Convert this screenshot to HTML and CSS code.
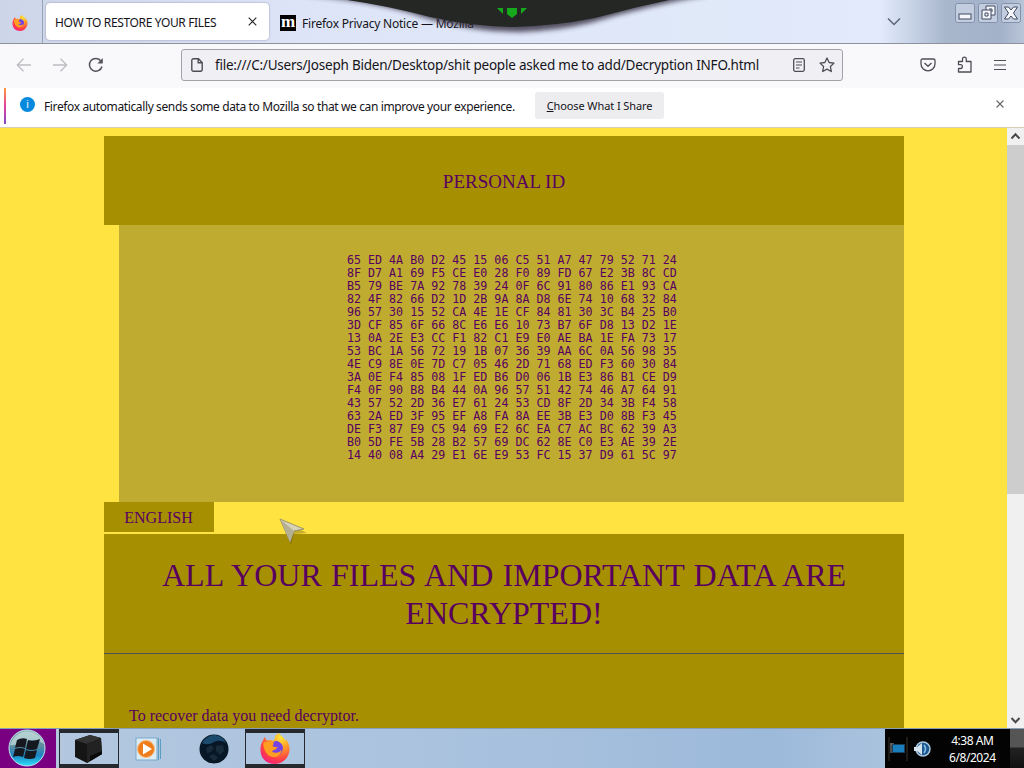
FILE: index.html
```
<!DOCTYPE html>
<html lang="en">
<head>
    <meta charset="UTF-8">
    <meta name="viewport" content="width=device-width, initial-scale=1.0">
    <title>HOW TO RESTORE YOUR FILES</title>
    <link rel="stylesheet" href="styles.css">
</head>
<body>
    <svg class="defs" width="0" height="0">
        <defs>
            <radialGradient id="fox" cx="0.7" cy="0.15" r="1">
                <stop offset="0" stop-color="#ffe63b"/>
                <stop offset="0.35" stop-color="#ff9a27"/>
                <stop offset="0.7" stop-color="#ff4045"/>
                <stop offset="1" stop-color="#f0148c"/>
            </radialGradient>
            <symbol id="firefox" viewBox="0 0 32 32">
                <path fill="url(#fox)" d="M20 0c2 3 5 4 7 8l1-1c3 5 4 10 2 15-2 6-8 10-14 10C7 32 1 26 1 17c0-4 1-7 3-10l1-3 3 4c2-1 4-1 6 0 2-1 2-3 2-5 1-1 3-2 4-3z"/>
                <path fill="#7542e4" d="M17 8c5 1 8 5 7 9-1 5-5 7-9 6-4 0-6-3-6-6l5 1c2 0 3-2 5-3l-5-1c-1-2 0-5 3-6z"/>
                <path fill="#ff9e20" d="M4 10c4-2 8-1 11 1l-3 3 6 1c-1 3-4 2-5 4 4 3 8 1 10-2-1 7-7 9-12 7-5-3-7-8-7-14z"/>
            </symbol>
        </defs>
    </svg>

    <header class="titlebar">
        <div class="pinned"><svg width="16" height="16"><use href="#firefox"/></svg></div>
        <div class="tab active">
            <span class="tab-title">HOW TO RESTORE YOUR FILES</span>
            <svg width="9" height="9" viewBox="0 0 9 9"><path d="M.7.7l7.6 7.6M8.3.7L.7 8.3" stroke="#222" stroke-width="1.1"/></svg>
        </div>
        <div class="tab second">
            <span class="moz">m</span>
            <span class="tab-title privacy">Firefox Privacy Notice — Mozilla</span>
        </div>
        <svg class="tabs-arrow" width="14" height="9" viewBox="0 0 14 9"><path d="M1 1.5l6 6 6-6" fill="none" stroke="#5d6478" stroke-width="1.5"/></svg>
        <div class="window-buttons">
            <svg width="20" height="20" viewBox="0 0 20 20"><rect class="key" x=".5" y=".5" width="19" height="19" rx="2"/><rect class="sign" x="4" y="11" width="12" height="5"/></svg>
            <svg width="20" height="20" viewBox="0 0 20 20"><rect class="key" x=".5" y=".5" width="19" height="19" rx="2"/><path class="sign" d="M8 3h9v9h-4v4H4V7h4z"/><path class="lines" d="M8 7h5v5M7 10h3v3H7zM11 6h3v3"/></svg>
            <svg width="20" height="20" viewBox="0 0 20 20"><rect class="key" x=".5" y=".5" width="19" height="19" rx="2"/><path class="sign" d="M3.500 4h4L10 7l2.500-3h4l-4 6 4 6h-4L10 13l-2.500 3h-4l4-6z"/></svg>
        </div>
        <svg class="notch" width="440" height="43" viewBox="0 0 440 43">
            <defs><filter id="soft" x="-10%" y="-20%" width="120%" height="160%"><feGaussianBlur stdDeviation="2.500"/></filter></defs>
            <path d="M0-5Q65 0 110 13Q165 32 220 32Q255 31 290 23Q350 5 410-5z" fill="#30293e" opacity=".8" filter="url(#soft)"/>
            <path d="M40-1Q85 5 130 17Q175 27 215 27Q255 26 295 18Q335 7 374-1z" fill="#252725"/>
            <path d="M207 8h10v6l-5 4-5-4z" fill="#16a81d"/>
            <path d="M197 8h6v6zM221 8h6l-6 6z" fill="#16a81d"/>
        </svg>
    </header>

    <nav class="toolbar">
        <svg class="back" width="16" height="16" viewBox="0 0 16 16"><path d="M15 8H1.500M7.500 1.800L1.300 8l6.200 6.200" fill="none" stroke="#bcbcc2" stroke-width="1.300"/></svg>
        <svg class="forward" width="16" height="16" viewBox="0 0 16 16"><path d="M1 8h13.500M8.500 1.800L14.700 8l-6.200 6.200" fill="none" stroke="#bcbcc2" stroke-width="1.300"/></svg>
        <svg class="reload" width="16" height="16" viewBox="0 0 16 16"><path d="M14 9.500A6.400 6.400 0 1 1 13 4" fill="none" stroke="#55555d" stroke-width="1.500"/><path d="M14.800 1v5.500H9.300z" fill="#55555d"/></svg>
        <div class="urlbar">
            <svg width="12" height="14" viewBox="0 0 12 14"><path d="M2.500.8h5l3.700 3.700v7.200a1.500 1.500 0 0 1-1.500 1.500H2.300A1.500 1.500 0 0 1 .8 11.700V2.300A1.500 1.500 0 0 1 2.500.8zM7.200.8v4h4" fill="none" stroke="#4d4d55" stroke-width="1.400"/></svg>
            <span class="url">file:///C:/Users/Joseph Biden/Desktop/shit people asked me to add/Decryption INFO.html</span>
            <svg class="reader" width="12" height="14" viewBox="0 0 12 14"><rect x=".7" y=".7" width="10.600" height="12.600" rx="1.500" fill="none" stroke="#4d4d55" stroke-width="1.300"/><path d="M3 4h6M3 7h6M3 10h3.500" stroke="#4d4d55" stroke-width="1.200"/></svg>
            <svg width="16" height="16" viewBox="0 0 16 16"><path d="M8 1l2.100 4.500 4.900.6-3.600 3.400.9 5L8 12.100l-4.300 2.400.9-5L1 6.100l4.900-.6z" fill="none" stroke="#4d4d55" stroke-width="1.300" stroke-linejoin="round"/></svg>
        </div>
        <div class="tools">
            <svg width="16" height="14" viewBox="0 0 16 14"><path d="M2.500 1h11Q15 1 15 2.500V6a7 6.800 0 0 1-14 0V2.500Q1 1 2.500 1zM4.500 5L8 8.300 11.500 5" fill="none" stroke="#4d4d55" stroke-width="1.300" stroke-linejoin="round"/></svg>
            <svg width="16" height="17" viewBox="0 0 16 17"><path d="M1.500 5.500h4V3a1.900 1.900 0 0 1 3.800 0v2.500H14V16H1.500v-3.500h2a1.900 1.900 0 0 0 0-3.800h-2z" fill="none" stroke="#4d4d55" stroke-width="1.300" stroke-linejoin="round"/></svg>
            <svg width="14" height="12" viewBox="0 0 14 12"><path d="M1 1.500h12M1 6h12M1 10.500h12" stroke="#4d4d55" stroke-width="1.200"/></svg>
        </div>
    </nav>

    <div class="notice">
        <span class="info">i</span>
        <span class="notice-text">Firefox automatically sends some data to Mozilla so that we can improve your experience.</span>
        <button class="choose"><u>C</u>hoose What I Share</button>
        <svg class="dismiss" width="8" height="8" viewBox="0 0 8 8"><path d="M.5.5l7 7M7.500.5l-7 7" stroke="#666" stroke-width="1.100"/></svg>
    </div>

    <div class="viewport">
        <main class="page">
            <div class="id-title">PERSONAL ID</div>
            <pre class="id-code">65 ED 4A B0 D2 45 15 06 C5 51 A7 47 79 52 71 24
8F D7 A1 69 F5 CE E0 28 F0 89 FD 67 E2 3B 8C CD
B5 79 BE 7A 92 78 39 24 0F 6C 91 80 86 E1 93 CA
82 4F 82 66 D2 1D 2B 9A 8A D8 6E 74 10 68 32 84
96 57 30 15 52 CA 4E 1E CF 84 81 30 3C B4 25 B0
3D CF 85 6F 66 8C E6 E6 10 73 B7 6F D8 13 D2 1E
13 0A 2E E3 CC F1 82 C1 E9 E0 AE BA 1E FA 73 17
53 BC 1A 56 72 19 1B 07 36 39 AA 6C 0A 56 98 35
4E C9 8E 0E 7D C7 05 46 2D 71 68 ED F3 60 30 84
3A 0E F4 85 08 1F ED B6 D0 06 1B E3 86 B1 CE D9
F4 0F 90 B8 B4 44 0A 96 57 51 42 74 46 A7 64 91
43 57 52 2D 36 E7 61 24 53 CD 8F 2D 34 3B F4 58
63 2A ED 3F 95 EF A8 FA 8A EE 3B E3 D0 8B F3 45
DE F3 87 E9 C5 94 69 E2 6C EA C7 AC BC 62 39 A3
B0 5D FE 5B 28 B2 57 69 DC 62 8E C0 E3 AE 39 2E
14 40 08 A4 29 E1 6E E9 53 FC 15 37 D9 61 5C 97</pre>
            <div class="lang">ENGLISH</div>
            <section class="note">
                <h1>ALL YOUR FILES AND IMPORTANT DATA ARE ENCRYPTED!</h1>
                <p>To recover data you need decryptor.</p>
            </section>
        </main>
        <div class="scrollbar">
            <svg width="17" height="17" viewBox="0 0 17 17"><path d="M4.500 10.500l4-4.200 4 4.200" fill="none" stroke="#4a4a4a" stroke-width="2"/></svg>
            <div class="thumb"></div>
            <svg class="down" width="17" height="17" viewBox="0 0 17 17"><path d="M4.500 7l4 4.200 4-4.200" fill="none" stroke="#4a4a4a" stroke-width="2"/></svg>
        </div>
    </div>

    <footer class="taskbar">
        <div class="start">
            <svg width="40" height="40" viewBox="0 0 40 40">
                <defs>
                    <linearGradient id="orb" x1="0" y1="0" x2="0" y2="1">
                        <stop offset="0" stop-color="#8fb6b8"/>
                        <stop offset=".45" stop-color="#5c8ca0"/>
                        <stop offset=".7" stop-color="#1b84c4"/>
                        <stop offset="1" stop-color="#2fe0fa"/>
                    </linearGradient>
                </defs>
                <circle cx="20" cy="19" r="18" fill="url(#orb)" stroke="#bfe4ec"/>
                <path d="M3 16Q8 3 20 2.500 33 3 37 15 27 8 18 13 10 17 3 16z" fill="#d6e9e6" opacity=".6"/>
                <path d="M10 11q5-3 10-1l-2 9q-5-2-10 0zM21 11q5 2 12-1l-3 10q-5 2-11 0zM8 20q5-2 10 0l-2 8q-5-2-10 0zM19 21q5 2 11 0l-2 8q-5 2-11 0z" fill="#15191f"/>
            </svg>
        </div>
        <div class="task open">
            <svg width="32" height="30" viewBox="0 0 32 30"><path d="M2 6l15-5 11 3 1 16-15 9L2 23z" fill="#151515"/><path d="M2 6l15-5 11 3-14 6z" fill="#333"/><path d="M14 10l14-6 1 16-15 9z" fill="#222"/><path d="M17 22l12-5v3l-12 7z" fill="#090909"/></svg>
        </div>
        <div class="task player">
            <svg width="28" height="26" viewBox="0 0 28 26"><rect x="1" y="2" width="21" height="22" fill="#dcecf5" stroke="#78a8c8"/><path d="M23.500 2v22M25.500 3v20" stroke="#5a9ec4"/><circle cx="11" cy="13" r="8.500" fill="#ef7c1b" stroke="#f9ba7c"/><path d="M8 7.500l9 5.500-9 5.500z" fill="#fff"/></svg>
        </div>
        <div class="task globe">
            <svg width="30" height="30" viewBox="0 0 30 30"><circle cx="15" cy="15" r="14.500" fill="#081726"/><path d="M3 9Q8 1 16 1q8 1 11 8-6-4-12-1-6 4-12 1z" fill="#1c4a6c"/><path d="M7 14l5-3 3 3-3 4-4 1zM17 12l7-1 1 6-4 4-4-4zM10 22l5-2 4 4-4 3z" fill="#182b3c"/></svg>
        </div>
        <div class="task open"><svg width="32" height="31"><use href="#firefox"/></svg></div>
        <div class="tray">
            <svg width="20" height="26" viewBox="0 0 20 26"><path d="M1 1v24M19 1v24" stroke="#3a3326"/><path d="M3 7v10M3 8h3" stroke="#9a9a9a"/><rect x="4.500" y="8.500" width="12" height="8" fill="#197dbc" stroke="#1b405d"/></svg>
            <svg class="sound" width="18" height="18" viewBox="0 0 18 18"><circle cx="10" cy="9" r="7" fill="#1d598f" stroke="#acc9de" stroke-width="1.500"/><path d="M1 7h3l5-4v12l-5-4H1z" fill="#d4e2ec"/><path d="M11 5q3 4 0 8" fill="none" stroke="#8ac0ee" stroke-width="1.500"/></svg>
            <div class="clock"><span>4:38 AM</span><span>6/8/2024</span></div>
            <div class="show-desktop"></div>
        </div>
    </footer>

    <svg class="cursor" width="30" height="28" viewBox="0 0 30 28">
        <path d="M3 3l25 12-13 1-3 11z" fill="#6b5a10" opacity=".4"/>
        <path d="M1 1l24 10-10 2-4 11z" fill="#d6d2b8" stroke="#8d8563" stroke-width=".8"/>
        <path d="M1 1l14 12-4 11z" fill="#b5af94"/>
    </svg>
</body>
</html>
```
FILE: styles.css
```
* {
    box-sizing: border-box;
}

body {
    margin: 0;
    width: 1024px;
    height: 768px;
    overflow: hidden;
    display: flex;
    flex-direction: column;
    font-family: "Noto Sans", "Open Sans", sans-serif;
    font-size: 12px;
    color: #15141a;
}

svg {
    display: block;
    flex: none;
}

.defs {
    position: absolute;
}

/* tabs */
.titlebar {
    position: relative;
    flex: none;
    height: 44px;
    display: flex;
    border-bottom: 1px solid #8c929e;
    background: linear-gradient(90deg, #cdd5e9 0, #d5dcf0 130px, #dde4f8 300px, #e0e9f8 700px, #e2eafb 880px, #c9d4e8 910px, #a9b7cd 945px, #a3b1c9 1000px, #b9c5d9 1024px);
}

.pinned {
    width: 43px;
    padding: 15px 0 0 12px;
    border-right: 1px solid #98a1b6;
}

.tab {
    display: flex;
    align-items: center;
    height: 37px;
    margin: 3px 0 0 3px;
    padding: 0 12px 0 9px;
    white-space: nowrap;
}

.tab.active {
    width: 223px;
    justify-content: space-between;
    background: #fff;
    border-radius: 4px;
    box-shadow: 0 0 2px #8088a0;
}

.tab.second {
    height: 39px;
    margin-left: 0;
}

.tab-title {
    padding-top: 1px;
    letter-spacing: -0.36px;
}

.moz {
    width: 16px;
    height: 16px;
    margin: 0 6px 0 2px;
    background: #000;
    color: #fff;
    font: bold 17px/13px "Liberation Serif", serif;
    text-align: center;
}

.privacy {
    width: 180px;
    overflow: hidden;
    letter-spacing: -0.22px;
}

.tabs-arrow {
    position: absolute;
    left: 887px;
    top: 17px;
}

.window-buttons {
    position: absolute;
    top: 3px;
    left: 955px;
    display: flex;
    gap: 3px;
}

.key {
    fill: #c3cde0;
    stroke: #8491ab;
}

.sign {
    fill: #f5f7fb;
    stroke: #3f4961;
}

.lines {
    fill: none;
    stroke: #3f4961;
}

.notch {
    position: absolute;
    left: 300px;
    top: 0;
}

/* toolbar */
.toolbar {
    flex: none;
    height: 44px;
    display: flex;
    align-items: center;
    padding: 0 17px 3px 16px;
    background: #f9f9fb;
}

.forward {
    margin-left: 20px;
}

.reload {
    margin-left: 20px;
}

.urlbar {
    display: flex;
    align-items: center;
    width: 662px;
    height: 32px;
    margin-left: 77px;
    padding: 0 7px 0 9px;
    background: #f0f0f4;
    border: 1px solid #a2a2a9;
    border-radius: 3px;
}

.url {
    flex: 1;
    margin-left: 12px;
    font-size: 13.5px;
    letter-spacing: -0.22px;
    white-space: nowrap;
}

.reader {
    margin-right: 14px;
}

.tools {
    flex: 1;
    display: flex;
    align-items: center;
    justify-content: space-between;
    margin-left: 77px;
}

/* data notice */
.notice {
    flex: none;
    display: flex;
    align-items: center;
    height: 40px;
    padding: 0 20px 4px 13px;
    background: linear-gradient(#ff9a3c, #e53f9b 50%, #7d4bc0) 4px 0 / 2px 36px no-repeat, #fff;
    border-bottom: 1px solid #d3cdb4;
}

.info {
    width: 15px;
    height: 15px;
    margin: 0 9px 2px 7px;
    border-radius: 50%;
    background: #078ade;
    color: #fff;
    font-size: 10px;
    line-height: 14px;
    text-align: center;
}

.notice-text {
    width: 491px;
    padding-top: 2px;
    letter-spacing: -0.38px;
    white-space: nowrap;
}

.choose {
    width: 129px;
    height: 27px;
    padding: 0;
    border: 0;
    border-radius: 3px;
    background: #ededf0;
    color: #15141a;
    font: 11px "Noto Sans", sans-serif;
    letter-spacing: -0.1px;
    white-space: nowrap;
}

.dismiss {
    margin: 0 0 3px auto;
}

/* document */
.viewport {
    flex: none;
    display: flex;
    height: 600px;
    overflow: hidden;
    background: #ffe340;
}

.page {
    width: 800px;
    margin: 8px 103px 0 104px;
    color: #580060;
    font-family: "Liberation Serif", "Times New Roman", serif;
}

.id-title {
    height: 89px;
    line-height: 91px;
    background: #a68f00;
    font-size: 19px;
    text-align: center;
}

.id-code {
    height: 277px;
    margin: 0 0 0 15px;
    padding: 29px 0 0 228px;
    background: #bfab30;
    font: 11.66px/13px "DejaVu Sans Mono", monospace;
}

.lang {
    width: 110px;
    height: 30px;
    margin-bottom: 2px;
    padding-right: 1px;
    background: #a68f00;
    font-size: 16px;
    line-height: 31px;
    text-align: center;
}

.note {
    height: 220px;
    background: #a68f00;
}

.note h1 {
    height: 120px;
    margin: 0;
    padding: 22px 40px 0;
    border-bottom: 1px solid #54505a;
    font-size: 32px;
    font-weight: normal;
    line-height: 38px;
    text-align: center;
    word-spacing: 1.3px;
}

.note p {
    margin: 0;
    padding: 53px 25px 0;
    font-size: 16px;
    line-height: 18px;
}

.scrollbar {
    display: flex;
    flex-direction: column;
    width: 17px;
    background: #f0f0f0;
}

.thumb {
    height: 349px;
    background: #cdcdcd;
}

.down {
    margin-top: auto;
}

/* taskbar */
.taskbar {
    flex: none;
    display: flex;
    height: 40px;
    background: linear-gradient(90deg, #b4c8df, #abc3df 40%, #9db9da 75%, #a9c2de 86%);
    border-top: 1px solid #879db8;
}

.start {
    width: 56px;
    padding-left: 7px;
    background: #7a0082;
}

.task {
    width: 60px;
    display: flex;
    align-items: center;
    justify-content: center;
}

.start + .task {
    margin-left: 3px;
}

.task.open {
    border: 1px solid #25282c;
    border-width: 4px 1px;
}

.globe {
    width: 66px;
    padding-left: 4px;
}

.tray {
    width: 139px;
    display: flex;
    align-items: center;
    margin-left: auto;
    background: #030304;
    color: #fff;
}

.tray > svg:first-child {
    margin-left: 3px;
}

.sound {
    margin-left: 5px;
}

.clock {
    display: flex;
    flex-direction: column;
    align-items: center;
    width: 78px;
    margin-left: 4px;
    line-height: 17px;
    letter-spacing: -0.45px;
}

.show-desktop {
    height: 39px;
    width: 15px;
    margin-left: auto;
    background: linear-gradient(#555 45%, #222 50%, #111);
}

.cursor {
    position: absolute;
    left: 279px;
    top: 518px;
}
```
